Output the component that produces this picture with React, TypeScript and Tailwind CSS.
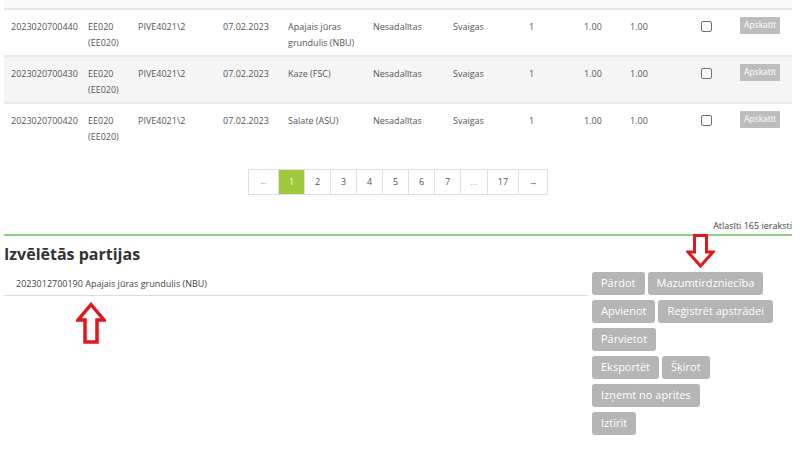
import React from "react";

type Row = {
  id: string;
  code: string;
  doc: string;
  date: string;
  name: string[];
  status: string;
  kind: string;
  qty: string;
  a: string;
  b: string;
};

const rows: Row[] = [
  { id: "2023020700440", code: "EE020", doc: "PIVE4021\\2", date: "07.02.2023", name: ["Apajais jūras", "grundulis (NBU)"], status: "Nesadalītas", kind: "Svaigas", qty: "1", a: "1.00", b: "1.00" },
  { id: "2023020700430", code: "EE020", doc: "PIVE4021\\2", date: "07.02.2023", name: ["Kaze (FSC)"], status: "Nesadalītas", kind: "Svaigas", qty: "1", a: "1.00", b: "1.00" },
  { id: "2023020700420", code: "EE020", doc: "PIVE4021\\2", date: "07.02.2023", name: ["Salate (ASU)"], status: "Nesadalītas", kind: "Svaigas", qty: "1", a: "1.00", b: "1.00" },
];

const pages = [
  { label: "←", w: "w-[29px]" },
  { label: "1", w: "w-[26px]", active: true },
  { label: "2", w: "w-[26px]" },
  { label: "3", w: "w-[26px]" },
  { label: "4", w: "w-[26px]" },
  { label: "5", w: "w-[26px]" },
  { label: "6", w: "w-[26px]" },
  { label: "7", w: "w-[26px]" },
  { label: "...", w: "w-[27px]" },
  { label: "17", w: "w-[31px]" },
  { label: "→", w: "w-[29px]" },
];

const actionRows = [
  ["Pārdot", "Mazumtirdzniecība"],
  ["Apvienot", "Reģistrēt apstrādei"],
  ["Pārvietot"],
  ["Eksportēt", "Šķirot"],
  ["Izņemt no aprites"],
  ["Iztīrīt"],
];

function UpArrow() {
  return (
    <svg width="30" height="42" viewBox="0 0 30 42" className="absolute left-[76px] top-[302px]">
      <path d="M15 2.5 L28 18 L21 18 L21 40 L9 40 L9 18 L2 18 Z" fill="white" stroke="#e3161b" strokeWidth="3.5" strokeLinejoin="miter" />
    </svg>
  );
}

function DownArrow() {
  return (
    <svg width="29" height="34" viewBox="0 0 29 34" className="absolute left-[686px] top-[234px]">
      <path d="M8.5 1.5 L20.5 1.5 L20.5 18 L27 18 L14.5 32 L2 18 L8.5 18 Z" fill="white" stroke="#e3161b" strokeWidth="3" strokeLinejoin="miter" />
    </svg>
  );
}

export default function App() {
  return (
    <div
      className="relative w-[800px] h-[457px] overflow-hidden bg-white text-[#555]"
      style={{ fontFamily: '"Open Sans", "Noto Sans", sans-serif' }}
    >
      {/* results table */}
      <div className="ml-[4px] w-[788px]">
        <div className="h-[10px] bg-[#f9f9f9] border-b-2 border-[#e8e8e8]" />
        {rows.map((r, i) => (
          <div
            key={r.id}
            className={`grid grid-cols-[77px_50px_85px_65px_85px_80px_76px_55px_46px_74px_36px_59px] h-[47px] text-[9px] leading-[16px] pt-[5px] ${
              i % 2 === 1 ? "bg-[#f5f5f5]" : "bg-white"
            } ${i < rows.length - 1 ? "border-b-2 border-[#e8e8e8]" : ""}`}
          >
            <div className="pl-[7px] pt-[4px]">{r.id}</div>
            <div className="pl-[7px] pt-[4px]">
              <div>{r.code}</div>
              <div>({r.code})</div>
            </div>
            <div className="pl-[7px] pt-[4px]">{r.doc}</div>
            <div className="pl-[7px] pt-[4px]">{r.date}</div>
            <div className="pl-[7px] pt-[4px]">
              {r.name.map((n) => (
                <div key={n}>{n}</div>
              ))}
            </div>
            <div className="pl-[7px] pt-[4px]">{r.status}</div>
            <div className="pl-[7px] pt-[4px]">{r.kind}</div>
            <div className="pl-[7px] pt-[4px]">{r.qty}</div>
            <div className="pl-[7px] pt-[4px]">{r.a}</div>
            <div className="pl-[7px] pt-[4px]">{r.b}</div>
            <div className="pl-[4px] pt-[6px]">
              <div className="w-[11px] h-[11px] border border-[#6f6f6f] rounded-[2px] bg-white" />
            </div>
            <div className="pl-[7px] pt-[2px]">
              <div className="inline-flex items-center h-[17px] px-[4px] bg-[#bdbdbd] text-white text-[8.5px] leading-none rounded-[1px]">
                Apskatīt
              </div>
            </div>
          </div>
        ))}

        {/* pagination */}
        <div className="flex justify-center mt-[18px]">
          <div className="flex border border-[#e0e0e0]">
            {pages.map((p, i) => (
              <div
                key={i}
                className={`${p.w} h-[24px] flex items-center justify-center text-[9px] ${
                  i > 0 ? "border-l border-[#e0e0e0]" : ""
                } ${p.active ? "bg-[#9dc93b] text-white" : "text-[#555]"} ${
                  p.label === "..." || p.label === "←" ? "text-[#aaa]" : ""
                }`}
              >
                {p.label}
              </div>
            ))}
          </div>
        </div>

        <div className="mt-[25px] text-right text-[9px] leading-[12px] pb-[2px] border-b-2 border-[#8fcb80] text-[#444]">
          Atlasīti 165 ieraksti
        </div>
      </div>

      {/* selected batches */}
      <div className="ml-[4px] mt-[8px]">
        <h2 className="text-[16px] leading-[20px] font-bold text-[#333]">Izvēlētās partijas</h2>
        <div className="flex mt-[8px] gap-[4px]">
          <div className="w-[584px]">
            <div className="h-[24px] pt-[4px] pl-[12px] text-[9px] leading-[16px] border-b border-[#dcdcdc] text-[#444]">
              2023012700190 Apajais jūras grundulis (NBU)
            </div>
          </div>
          <div className="flex flex-col gap-[5px]">
            {actionRows.map((row, i) => (
              <div key={i} className="flex gap-[3px]">
                {row.map((b) => (
                  <div
                    key={b}
                    className="h-[23px] px-[9px] flex items-center bg-[#b5b5b5] text-white text-[11px] rounded-[3px]"
                  >
                    {b}
                  </div>
                ))}
              </div>
            ))}
          </div>
        </div>
      </div>

      <UpArrow />
      <DownArrow />
    </div>
  );
}
